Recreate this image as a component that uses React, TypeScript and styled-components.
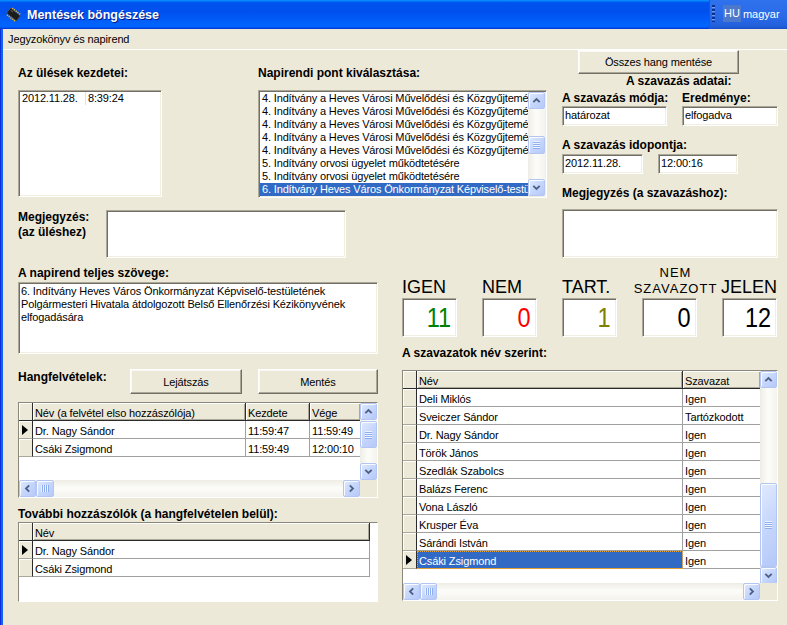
import React from "react";
import styled, { createGlobalStyle, css } from "styled-components";

const FONT = `"Liberation Sans", Arial, sans-serif`;

const GlobalStyle = createGlobalStyle`
  html, body { margin: 0; padding: 0; background: #ECE9D8; }
  body { font-family: ${FONT}; font-size: 11px; color: #000; overflow: hidden; }
  *, *::before, *::after { box-sizing: border-box; }
`;

const sunken = css`
  border-style: solid;
  border-width: 1px;
  border-color: #ACA899 #FFFFFF #FFFFFF #ACA899;
  box-shadow: inset 1px 1px 0 #716F64, inset -1px -1px 0 #F1EFE2;
  background: #FFFFFF;
`;

const raised = css`
  border-style: solid;
  border-width: 1px;
  border-color: #FFFFFF #716F64 #716F64 #FFFFFF;
  box-shadow: inset -1px -1px 0 #ACA899, inset 1px 1px 0 #F8F7F2;
  background: #ECE9D8;
`;

/* ---------- window chrome ---------- */

const Window = styled.div`
  width: 787px;
  height: 625px;
  overflow: hidden;
  display: flex;
  flex-direction: column;
  background: #ECE9D8;
  font-family: ${FONT};
  font-size: 11px;
  letter-spacing: -0.12px;
`;

const TitleBar = styled.div`
  flex: none;
  height: 29px;
  display: flex;
  align-items: center;
  padding-left: 5px;
  background: linear-gradient(
    180deg,
    #0997ff 0%,
    #0053ee 9%,
    #0050ee 40%,
    #0062fb 80%,
    #0066ff 90%,
    #005bff 94%,
    #003dd7 97%,
    #003dd7 100%
  );
`;

const TitleText = styled.div`
  margin-left: 5px;
  color: #ffffff;
  font-family: ${FONT};
  font-weight: bold;
  font-size: 12.5px;
  letter-spacing: 0;
  text-shadow: 1px 1px 0 #0a1883;
  white-space: nowrap;
`;

const LangBar = styled.div`
  margin-left: auto;
  align-self: stretch;
  width: 78px;
  display: flex;
  align-items: center;
  padding: 0 0 2px 2px;
  background: linear-gradient(180deg, #2f72ee 0%, #2a69e6 60%, #2260dc 90%, #1a4fc8 100%);
  border-left: 1px solid #1d55d2;
  color: #ffffff;
  font-size: 11px;
  letter-spacing: 0;
`;

const Grip = styled.span`
  width: 3px;
  height: 17px;
  flex: none;
  background: repeating-linear-gradient(180deg, #0b2f8f 0 2px, #6f9cf2 2px 3px, transparent 3px 4px);
`;

const LangCode = styled.span`
  margin-left: 8px;
  padding: 3px 1px 3px 1px;
  background: #4c79cc;
  line-height: 11px;
`;

const LangName = styled.span`
  margin-left: 2px;
`;

const ChipIcon = () => (
  <svg width="17" height="17" viewBox="0 0 17 17">
    <g transform="rotate(38 8.5 8.5)">
      {[0, 1, 2, 3, 4].map((i) => (
        <React.Fragment key={i}>
          <rect x={3.6 + i * 2.2} y={3.4} width={1.2} height={2} fill="#e0b83a" />
          <rect x={3.6 + i * 2.2} y={11.6} width={1.2} height={2} fill="#e0b83a" />
        </React.Fragment>
      ))}
      <rect x={2.2} y={5.2} width={12.6} height={6.6} rx={1} fill="#1b1b1b" stroke="#5a5a5a" strokeWidth={0.7} />
      <rect x={3.5} y={6.3} width={3} height={1.2} fill="#4a4a4a" />
    </g>
  </svg>
);

const BodyRow = styled.div`
  flex: 1;
  min-height: 0;
  display: flex;
`;

const FrameEdge = styled.div`
  width: 3px;
  flex: none;
  background: linear-gradient(90deg, #0831d9 0 1px, #1362eb 1px 3px);
`;

const Main = styled.div`
  flex: 1;
  min-width: 0;
  display: flex;
  flex-direction: column;
`;

const MenuBar = styled.div`
  flex: none;
  height: 21px;
  padding: 4px 0 0 5px;
  line-height: 13px;
  border-bottom: 1px solid #ffffff;
  display: flex;
`;

const MenuItem = styled.span`
  white-space: nowrap;
`;

const Client = styled.div`
  flex: 1;
  display: flex;
  flex-direction: column;
  padding-left: 15px;
`;

/* ---------- generic controls ---------- */

const FieldLabel = styled.div<{ $mt?: number; $pl?: number }>`
  font-weight: bold;
  font-size: 12px;
  line-height: 14px;
  height: 14px;
  letter-spacing: 0;
  white-space: nowrap;
  margin-top: ${(p) => p.$mt ?? 0}px;
  padding-left: ${(p) => p.$pl ?? 0}px;
`;

const TextBox = styled.div<{ $w: number; $h: number; $mt?: number }>`
  ${sunken};
  width: ${(p) => p.$w}px;
  height: ${(p) => p.$h}px;
  margin-top: ${(p) => p.$mt ?? 0}px;
  flex: none;
  padding: 2px 2px;
  line-height: 13px;
  white-space: nowrap;
  overflow: hidden;
`;

const Button = styled.div<{ $w: number; $h: number; $ml?: number }>`
  ${raised};
  width: ${(p) => p.$w}px;
  height: ${(p) => p.$h}px;
  margin-left: ${(p) => p.$ml ?? 0}px;
  flex: none;
  display: flex;
  align-items: center;
  justify-content: center;
  white-space: nowrap;
`;

/* ---------- scrollbars ---------- */

const SBButton = styled.div`
  flex: none;
  width: 17px;
  height: 17px;
  display: flex;
  align-items: center;
  justify-content: center;
  border: 1px solid #b3c6f3;
  border-radius: 2px;
  background: linear-gradient(135deg, #e1eafe 0%, #c8d8fc 45%, #b5c8f8 100%);
  box-shadow: inset 1px 1px 0 rgba(255, 255, 255, 0.85);
`;

const ThumbV = styled(SBButton)<{ $h: number }>`
  height: ${(p) => p.$h}px;
`;

const ThumbH = styled(SBButton)<{ $w: number }>`
  width: ${(p) => p.$w}px;
`;

const GripV = styled.span`
  width: 7px;
  height: 8px;
  background: repeating-linear-gradient(180deg, #eef3fe 0 1px, #8eaef0 1px 2px);
`;

const GripH = styled.span`
  width: 8px;
  height: 7px;
  background: repeating-linear-gradient(90deg, #eef3fe 0 1px, #8eaef0 1px 2px);
`;

const ArrowSvg = styled.svg<{ $rot: number }>`
  transform: rotate(${(p) => p.$rot}deg);
`;

type Dir = "up" | "down" | "left" | "right";
const ROT: Record<Dir, number> = { up: 0, down: 180, left: -90, right: 90 };

const Arrow = ({ dir }: { dir: Dir }) => (
  <ArrowSvg $rot={ROT[dir]} width="9" height="9" viewBox="0 0 9 9">
    <path d="M1.3 6.2 L4.5 3 L7.7 6.2" fill="none" stroke="#4d6185" strokeWidth="1.8" />
  </ArrowSvg>
);

const VBar = styled.div`
  width: 17px;
  flex: none;
  display: flex;
  flex-direction: column;
  background: linear-gradient(90deg, #eeede5 0%, #fcfcf9 45%, #f4f3ee 100%);
`;

const HBar = styled.div`
  flex: 1;
  height: 17px;
  display: flex;
  background: linear-gradient(180deg, #eeede5 0%, #fcfcf9 45%, #f4f3ee 100%);
`;

const Track = styled.div<{ $dir: "v" | "h" }>`
  flex: 1;
  display: flex;
  flex-direction: ${(p) => (p.$dir === "v" ? "column" : "row")};
`;

const Gap = styled.div<{ $size: number; $dir: "v" | "h" }>`
  flex: none;
  ${(p) => (p.$dir === "v" ? `height: ${p.$size}px;` : `width: ${p.$size}px;`)}
`;

const VScroll = ({ offset, size }: { offset: number; size: number }) => (
  <VBar>
    <SBButton>
      <Arrow dir="up" />
    </SBButton>
    <Track $dir="v">
      <Gap $dir="v" $size={offset} />
      <ThumbV $h={size}>
        <GripV />
      </ThumbV>
    </Track>
    <SBButton>
      <Arrow dir="down" />
    </SBButton>
  </VBar>
);

const HScroll = ({ offset, size }: { offset: number; size: number }) => (
  <HBar>
    <SBButton>
      <Arrow dir="left" />
    </SBButton>
    <Track $dir="h">
      <Gap $dir="h" $size={offset} />
      <ThumbH $w={size}>
        <GripH />
      </ThumbH>
    </Track>
    <SBButton>
      <Arrow dir="right" />
    </SBButton>
  </HBar>
);

/* ---------- list boxes ---------- */

const ListBox = styled.div<{ $w: number; $h: number }>`
  ${sunken};
  width: ${(p) => p.$w}px;
  height: ${(p) => p.$h}px;
  margin-top: 10px;
  padding: 1px;
  display: flex;
  overflow: hidden;
`;

const ListItems = styled.div`
  flex: 1;
  min-width: 0;
  display: flex;
  flex-direction: column;
  overflow: hidden;
`;

const ListRow = styled.div<{ $sel?: boolean }>`
  flex: none;
  height: 13px;
  line-height: 13px;
  display: flex;
  white-space: nowrap;
  overflow: hidden;
  padding-left: 2px;
  letter-spacing: -0.15px;
  background: ${(p) => (p.$sel ? "#316ac5" : "transparent")};
  color: ${(p) => (p.$sel ? "#ffffff" : "#000000")};
`;

const ListCell = styled.span<{ $w?: number; $sep?: boolean }>`
  ${(p) => (p.$w ? `width: ${p.$w}px; flex: none;` : "")}
  ${(p) => (p.$sep ? "border-right: 1px solid #e4e2d8;" : "padding-left: 2px;")}
`;

/* ---------- data grid ---------- */

const GridFrame = styled.div<{ $w: number; $h: number; $mt: number }>`
  width: ${(p) => p.$w}px;
  height: ${(p) => p.$h}px;
  margin-top: ${(p) => p.$mt}px;
  flex: none;
  border: 1px solid;
  border-color: #8a877a #ffffff #ffffff #8a877a;
  background: #ffffff;
  display: flex;
  flex-direction: column;
  overflow: hidden;
`;

const GridTop = styled.div`
  flex: 1;
  min-height: 0;
  display: flex;
`;

const GridTable = styled.div`
  flex: 1;
  min-width: 0;
  display: flex;
  flex-direction: column;
  overflow: hidden;
`;

const GRow = styled.div`
  flex: none;
  height: 18px;
  display: flex;
`;

const RowHead = styled.div<{ $header?: boolean }>`
  width: 14px;
  height: 18px;
  flex: none;
  background: #ece9d8;
  border-right: 1px solid #2b2b2b;
  border-bottom: 1px solid ${(p) => (p.$header ? "#2b2b2b" : "#aca899")};
  box-shadow: inset 1px 1px 0 #ffffff;
  display: flex;
  align-items: center;
  padding-left: 3px;
`;

const CurrentMark = styled.span`
  width: 0;
  height: 0;
  border-top: 5px solid transparent;
  border-bottom: 5px solid transparent;
  border-left: 6px solid #000000;
`;

const HeadCell = styled.div<{ $w: number }>`
  width: ${(p) => p.$w}px;
  height: 18px;
  flex: none;
  background: #ece9d8;
  border-right: 1px solid #2b2b2b;
  border-bottom: 1px solid #2b2b2b;
  box-shadow: inset 1px 1px 0 #ffffff, inset -1px -1px 0 #aca899;
  padding: 4px 0 0 2px;
  line-height: 13px;
  white-space: nowrap;
  overflow: hidden;
`;

const Cell = styled.div<{ $w: number; $sel?: boolean }>`
  width: ${(p) => p.$w}px;
  height: 18px;
  flex: none;
  border-right: 1px solid #a0a0a0;
  border-bottom: 1px solid #a0a0a0;
  padding: 4px 0 0 2px;
  line-height: 13px;
  white-space: nowrap;
  overflow: hidden;
  background: ${(p) => (p.$sel ? "#316ac5" : "#ffffff")};
  color: ${(p) => (p.$sel ? "#ffffff" : "#000000")};
  ${(p) =>
    p.$sel &&
    css`
      outline: 1px dotted #e6a53a;
      outline-offset: -1px;
    `}
`;

const GridFiller = styled.div`
  flex: 1;
  background: #ffffff;
`;

const HRow = styled.div`
  flex: none;
  height: 17px;
  display: flex;
`;

const Corner = styled.div`
  width: 17px;
  flex: none;
  background: #ece9d8;
`;

type Col = { title: string; w: number };

interface GridProps {
  w: number;
  h: number;
  mt: number;
  cols: Col[];
  rows: string[][];
  current: number;
  selected?: [number, number];
  vscroll?: { offset: number; size: number };
  hscroll?: { offset: number; size: number };
}

const DataGrid = ({ w, h, mt, cols, rows, current, selected, vscroll, hscroll }: GridProps) => (
  <GridFrame $w={w} $h={h} $mt={mt}>
    <GridTop>
      <GridTable>
        <GRow>
          <RowHead $header />
          {cols.map((c) => (
            <HeadCell key={c.title} $w={c.w}>
              {c.title}
            </HeadCell>
          ))}
        </GRow>
        {rows.map((r, ri) => (
          <GRow key={ri}>
            <RowHead>{ri === current && <CurrentMark />}</RowHead>
            {r.map((v, ci) => (
              <Cell
                key={ci}
                $w={cols[ci].w}
                $sel={!!selected && selected[0] === ri && selected[1] === ci}
              >
                {v}
              </Cell>
            ))}
          </GRow>
        ))}
        <GridFiller />
      </GridTable>
      {vscroll && <VScroll offset={vscroll.offset} size={vscroll.size} />}
    </GridTop>
    {hscroll && (
      <HRow>
        <HScroll offset={hscroll.offset} size={hscroll.size} />
        <Corner />
      </HRow>
    )}
  </GridFrame>
);

/* ---------- layout ---------- */

const TopSection = styled.div`
  flex: none;
  display: flex;
`;

const TopLeft = styled.div`
  width: 528px;
  flex: none;
  display: flex;
  flex-direction: column;
`;

const ListsRow = styled.div`
  display: flex;
  padding-top: 16px;
`;

const Column = styled.div<{ $w: number; $ml?: number }>`
  width: ${(p) => p.$w}px;
  margin-left: ${(p) => p.$ml ?? 0}px;
  flex: none;
  display: flex;
  flex-direction: column;
`;

const MegjRow = styled.div`
  display: flex;
  margin-top: 12px;
`;

const MegjLabel = styled.div`
  width: 88px;
  flex: none;
  font-weight: bold;
  font-size: 12px;
  line-height: 15px;
  letter-spacing: 0;
  white-space: nowrap;
`;

const TopRight = styled.div`
  width: 216px;
  margin-left: 16px;
  flex: none;
  display: flex;
  flex-direction: column;
`;

const PairRow = styled.div<{ $mt?: number }>`
  display: flex;
  gap: 15px;
  margin-top: ${(p) => p.$mt ?? 0}px;
`;

const PairCol = styled.div<{ $w: number }>`
  width: ${(p) => p.$w}px;
  flex: none;
  display: flex;
  flex-direction: column;
`;

const BottomSection = styled.div`
  flex: none;
  display: flex;
`;

const BottomLeft = styled.div`
  width: 360px;
  flex: none;
  display: flex;
  flex-direction: column;
`;

const HangRow = styled.div`
  display: flex;
  margin-top: 15px;
  height: 25px;
`;

const HangLabel = styled.div`
  width: 112px;
  flex: none;
  padding-top: 1px;
  font-weight: bold;
  font-size: 12px;
  line-height: 14px;
  letter-spacing: 0;
  white-space: nowrap;
`;

const BottomRight = styled.div`
  width: 376px;
  margin-left: 24px;
  flex: none;
  display: flex;
  flex-direction: column;
`;

const VoteRow = styled.div`
  display: flex;
  gap: 25px;
  margin-top: 19px;
`;

const VoteCol = styled.div`
  width: 55px;
  flex: none;
  display: flex;
  flex-direction: column;
`;

const VoteLabel = styled.div<{ $multi?: boolean; $shift?: number }>`
  height: 20px;
  display: flex;
  align-items: flex-end;
  white-space: nowrap;
  margin-left: ${(p) => p.$shift ?? 0}px;
  ${(p) =>
    p.$multi
      ? css`
          justify-content: center;
          padding-left: 12px;
          text-align: center;
          font-size: 13px;
          line-height: 16px;
          letter-spacing: 1px;
        `
      : css`
          font-size: 18px;
          line-height: 20px;
          letter-spacing: 0;
        `}
`;

const VoteBox = styled.div<{ $color: string }>`
  ${sunken};
  margin-top: 1px;
  height: 39px;
  padding: 1px 5px 0 0;
  text-align: right;
  font-size: 28px;
  line-height: 35px;
  letter-spacing: 0;
  color: ${(p) => p.$color};
`;

const Digits = styled.span`
  display: inline-block;
  transform: scaleX(0.84);
  transform-origin: right center;
`;

/* ---------- data ---------- */

const agendaItems = [
  "4. Indítvány a Heves Városi Művelődési és Közgyűjteményi Intézmény",
  "4. Indítvány a Heves Városi Művelődési és Közgyűjteményi Intézmény",
  "4. Indítvány a Heves Városi Művelődési és Közgyűjteményi Intézmény",
  "4. Indítvány a Heves Városi Művelődési és Közgyűjteményi Intézmény",
  "4. Indítvány a Heves Városi Művelődési és Közgyűjteményi Intézmény",
  "5. Indítvány orvosi ügyelet működtetésére",
  "5. Indítvány orvosi ügyelet működtetésére",
  "6. Indítvány Heves Város Önkormányzat Képviselő-testületének",
];

const votes = [
  { label: "IGEN", value: "11", color: "#008000" },
  { label: "NEM", value: "0", color: "#ff0000" },
  { label: "TART.", value: "1", color: "#808000" },
  { label: "NEM SZAVAZOTT", value: "0", color: "#000000", multi: true },
  { label: "JELEN", value: "12", color: "#000000", shift: -1 },
];

const voterRows = [
  ["Deli Miklós", "Igen"],
  ["Sveiczer Sándor", "Tartózkodott"],
  ["Dr. Nagy Sándor", "Igen"],
  ["Török János", "Igen"],
  ["Szedlák Szabolcs", "Igen"],
  ["Balázs Ferenc", "Igen"],
  ["Vona László", "Igen"],
  ["Krusper Éva", "Igen"],
  ["Sárándi István", "Igen"],
  ["Csáki Zsigmond", "Igen"],
];

export default function App() {
  return (
    <>
      <GlobalStyle />
      <Window>
        <TitleBar>
          <ChipIcon />
          <TitleText>Mentések böngészése</TitleText>
          <LangBar>
            <Grip />
            <LangCode>HU</LangCode>
            <LangName>magyar</LangName>
          </LangBar>
        </TitleBar>
        <BodyRow>
          <FrameEdge />
          <Main>
            <MenuBar>
              <MenuItem>Jegyzokönyv és napirend</MenuItem>
            </MenuBar>
            <Client>
              <TopSection>
                <TopLeft>
                  <ListsRow>
                    <Column $w={144}>
                      <FieldLabel>Az ülések kezdetei:</FieldLabel>
                      <ListBox $w={144} $h={107}>
                        <ListItems>
                          <ListRow>
                            <ListCell $w={64} $sep>
                              2012.11.28.
                            </ListCell>
                            <ListCell>8:39:24</ListCell>
                          </ListRow>
                        </ListItems>
                      </ListBox>
                    </Column>
                    <Column $w={289} $ml={96}>
                      <FieldLabel>Napirendi pont kiválasztása:</FieldLabel>
                      <ListBox $w={289} $h={108}>
                        <ListItems>
                          {agendaItems.map((t, i) => (
                            <ListRow key={i} $sel={i === agendaItems.length - 1}>
                              {t}
                            </ListRow>
                          ))}
                        </ListItems>
                        <VScroll offset={27} size={18} />
                      </ListBox>
                    </Column>
                  </ListsRow>
                  <MegjRow>
                    <MegjLabel>
                      Megjegyzés:
                      <br />
                      (az üléshez)
                    </MegjLabel>
                    <TextBox $w={240} $h={48} />
                  </MegjRow>
                </TopLeft>
                <TopRight>
                  <Button $w={161} $h={24} $ml={16}>
                    Összes hang mentése
                  </Button>
                  <FieldLabel $pl={64}>A szavazás adatai:</FieldLabel>
                  <PairRow $mt={3}>
                    <PairCol $w={105}>
                      <FieldLabel>A szavazás módja:</FieldLabel>
                      <TextBox $w={105} $h={20} $mt={1}>
                        határozat
                      </TextBox>
                    </PairCol>
                    <PairCol $w={96}>
                      <FieldLabel>Eredménye:</FieldLabel>
                      <TextBox $w={96} $h={20} $mt={1}>
                        elfogadva
                      </TextBox>
                    </PairCol>
                  </PairRow>
                  <FieldLabel $mt={12}>A szavazás idopontja:</FieldLabel>
                  <PairRow $mt={2}>
                    <TextBox $w={81} $h={20}>
                      2012.11.28.
                    </TextBox>
                    <TextBox $w={80} $h={20}>
                      12:00:16
                    </TextBox>
                  </PairRow>
                  <FieldLabel $mt={12}>Megjegyzés (a szavazáshoz):</FieldLabel>
                  <TextBox $w={216} $h={49} $mt={9} />
                </TopRight>
              </TopSection>
              <BottomSection>
                <BottomLeft>
                  <FieldLabel $mt={8}>A napirend teljes szövege:</FieldLabel>
                  <TextBox $w={360} $h={72} $mt={2}>
                    6. Indítvány Heves Város Önkormányzat Képviselő-testületének
                    <br />
                    Polgármesteri Hivatala átdolgozott Belső Ellenőrzési Kézikönyvének
                    <br />
                    elfogadására
                  </TextBox>
                  <HangRow>
                    <HangLabel>Hangfelvételek:</HangLabel>
                    <Button $w={112} $h={25}>
                      Lejátszás
                    </Button>
                    <Button $w={120} $h={25} $ml={16}>
                      Mentés
                    </Button>
                  </HangRow>
                  <DataGrid
                    w={360}
                    h={96}
                    mt={8}
                    cols={[
                      { title: "Név (a felvétel elso hozzászólója)", w: 213 },
                      { title: "Kezdete", w: 64 },
                      { title: "Vége", w: 51 },
                    ]}
                    rows={[
                      ["Dr. Nagy Sándor", "11:59:47", "11:59:49"],
                      ["Csáki Zsigmond", "11:59:49", "12:00:10"],
                    ]}
                    current={0}
                    vscroll={{ offset: 1, size: 27 }}
                    hscroll={{ offset: 0, size: 18 }}
                  />
                  <FieldLabel $mt={9}>További hozzászólók (a hangfelvételen belül):</FieldLabel>
                  <DataGrid
                    w={360}
                    h={80}
                    mt={1}
                    cols={[{ title: "Név", w: 337 }]}
                    rows={[["Dr. Nagy Sándor"], ["Csáki Zsigmond"]]}
                    current={0}
                  />
                </BottomLeft>
                <BottomRight>
                  <VoteRow>
                    {votes.map((v) => (
                      <VoteCol key={v.label}>
                        <VoteLabel $multi={v.multi} $shift={v.shift}>
                          {v.multi ? (
                            <span>
                              NEM
                              <br />
                              SZAVAZOTT
                            </span>
                          ) : (
                            v.label
                          )}
                        </VoteLabel>
                        <VoteBox $color={v.color}>
                          <Digits>{v.value}</Digits>
                        </VoteBox>
                      </VoteCol>
                    ))}
                  </VoteRow>
                  <FieldLabel $mt={9}>A szavazatok név szerint:</FieldLabel>
                  <DataGrid
                    w={376}
                    h={231}
                    mt={10}
                    cols={[
                      { title: "Név", w: 266 },
                      { title: "Szavazat", w: 78 },
                    ]}
                    rows={voterRows}
                    current={9}
                    selected={[9, 0]}
                    vscroll={{ offset: 95, size: 84 }}
                    hscroll={{ offset: 0, size: 17 }}
                  />
                </BottomRight>
              </BottomSection>
            </Client>
          </Main>
        </BodyRow>
      </Window>
    </>
  );
}
